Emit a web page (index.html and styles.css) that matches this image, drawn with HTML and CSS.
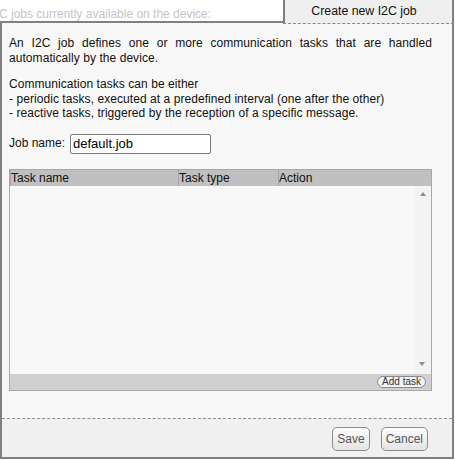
FILE: index.html
```html
<!DOCTYPE html>
<html>
<head>
<meta charset="utf-8">
<link rel="stylesheet" href="styles.css">
</head>
<body>
<div class="wrap">
  <div class="top">
    <div class="caption"><span>I2C jobs currently available on the device:</span></div>
    <div class="tab">Create new I2C job</div>
  </div>
  <div class="dialog">
    <div class="content">
      <p>An I2C job defines one or more communication tasks that are handled automatically by the device.</p>
      <p>Communication tasks can be either<br>- periodic tasks, executed at a predefined interval (one after the other)<br>- reactive tasks, triggered by the reception of a specific message.</p>
      <div class="jobrow">
        <label class="joblabel" for="job">Job name:</label>
        <input class="jobinput" id="job" type="text" value="default.job">
      </div>
      <div class="table">
        <div class="thead">
          <div class="th">Task name</div>
          <div class="th">Task type</div>
          <div class="th">Action</div>
        </div>
        <div class="tbody">
          <div class="rows"></div>
          <div class="scroll">
            <span class="arrow up"></span>
            <span class="arrow down"></span>
          </div>
        </div>
        <div class="tfoot">
          <button class="add" type="button">Add task</button>
        </div>
      </div>
    </div>
    <div class="footer">
      <button class="btn" type="button">Save</button>
      <button class="btn" type="button">Cancel</button>
    </div>
  </div>
</div>
</body>
</html>
```
FILE: styles.css
```css
html, body {
  margin: 0;
  background: #ffffff;
  font-family: "Liberation Sans", Arial, sans-serif;
  font-size: 12px;
  color: #111;
}
.wrap {
  width: 454px;
}
.top {
  display: flex;
  align-items: flex-start;
  height: 24px;
  background: linear-gradient(to right, #808080 2px, #f8f8f8 2px);
}
.caption {
  flex: 1;
  box-sizing: border-box;
  height: 23px;
  padding-top: 7px;
  line-height: 15px;
  border-bottom: 2px solid #808080;
  background: #ffffff;
  color: #c4c4c4;
  white-space: nowrap;
  overflow: hidden;
}
.caption span {
  display: inline-block;
  margin-left: -11px;
}
.tab {
  width: 158px;
  height: 23px;
  padding-right: 9px;
  line-height: 23px;
  text-align: center;
  background: #efefef;
  border-left: 2px solid #808080;
  border-right: 2px solid #808080;
  border-bottom: 1px dashed #8a8a8a;
  color: #111;
  font-size: 12.3px;
}
.dialog {
  border-left: 2px solid #808080;
  border-right: 2px solid #808080;
  border-bottom: 2px solid #808080;
  background: #f8f8f8;
}
.content {
  padding: 12px 20px 27px 7px;
}
.content p {
  margin: 0 0 12px;
  line-height: 14.5px;
  letter-spacing: 0.06px;
  text-align: justify;
}
.content p + p {
  margin-bottom: 13px;
}
.jobrow {
  display: flex;
  align-items: center;
  height: 20px;
}
.joblabel {
  line-height: 14.5px;
}
.jobinput {
  box-sizing: border-box;
  width: 141px;
  height: 20px;
  margin: 0 0 0 5px;
  padding: 0 2px;
  border: 1px solid #7a7a7a;
  border-radius: 2px;
  background: #fff;
  font-family: "Liberation Sans", Arial, sans-serif;
  font-size: 13px;
  color: #000;
  outline: none;
}
.table {
  margin-top: 15px;
  border: 1px solid #a8a8a8;
  background: #f8f8f8;
}
.thead {
  display: grid;
  grid-template-columns: 168px 100px 1fr;
  height: 16px;
  background: #c0c0c0;
  line-height: 16px;
}
.th {
  border-left: 1px solid #a4a4a4;
  color: #111;
  white-space: nowrap;
}
.tbody {
  display: flex;
  height: 188px;
}
.rows {
  flex: 1;
}
.scroll {
  position: relative;
  width: 16px;
  background: #f3f3f3;
}
.arrow {
  position: absolute;
  left: 5px;
  width: 0;
  height: 0;
  border-left: 3px solid transparent;
  border-right: 3px solid transparent;
}
.arrow.up {
  top: 6px;
  border-bottom: 4px solid #8c8c8c;
}
.arrow.down {
  bottom: 8px;
  left: 4px;
  border-top: 4px solid #8c8c8c;
}
.tfoot {
  display: flex;
  justify-content: flex-end;
  align-items: center;
  height: 16px;
  padding-right: 5px;
  background: #d0d0d0;
}
.add {
  box-sizing: border-box;
  height: 12px;
  margin: 0;
  padding: 0 4px;
  border: 1px solid #8a8a8a;
  border-radius: 6px;
  background: #f4f4f4;
  font-family: "Liberation Sans", Arial, sans-serif;
  font-size: 10px;
  line-height: 10px;
  color: #333;
}
.footer {
  display: flex;
  justify-content: flex-end;
  gap: 11px;
  padding: 8px 24px 6px 0;
  border-top: 1px dashed #909090;
  background: #f0f0f0;
}
.btn {
  box-sizing: border-box;
  height: 24px;
  margin: 0;
  padding: 0 4px;
  border: 1px solid #8c8c8c;
  border-radius: 5px;
  background: linear-gradient(#fcfcfc, #e4e4e4);
  font-family: "Liberation Sans", Arial, sans-serif;
  font-size: 12px;
  color: #555;
}
```
